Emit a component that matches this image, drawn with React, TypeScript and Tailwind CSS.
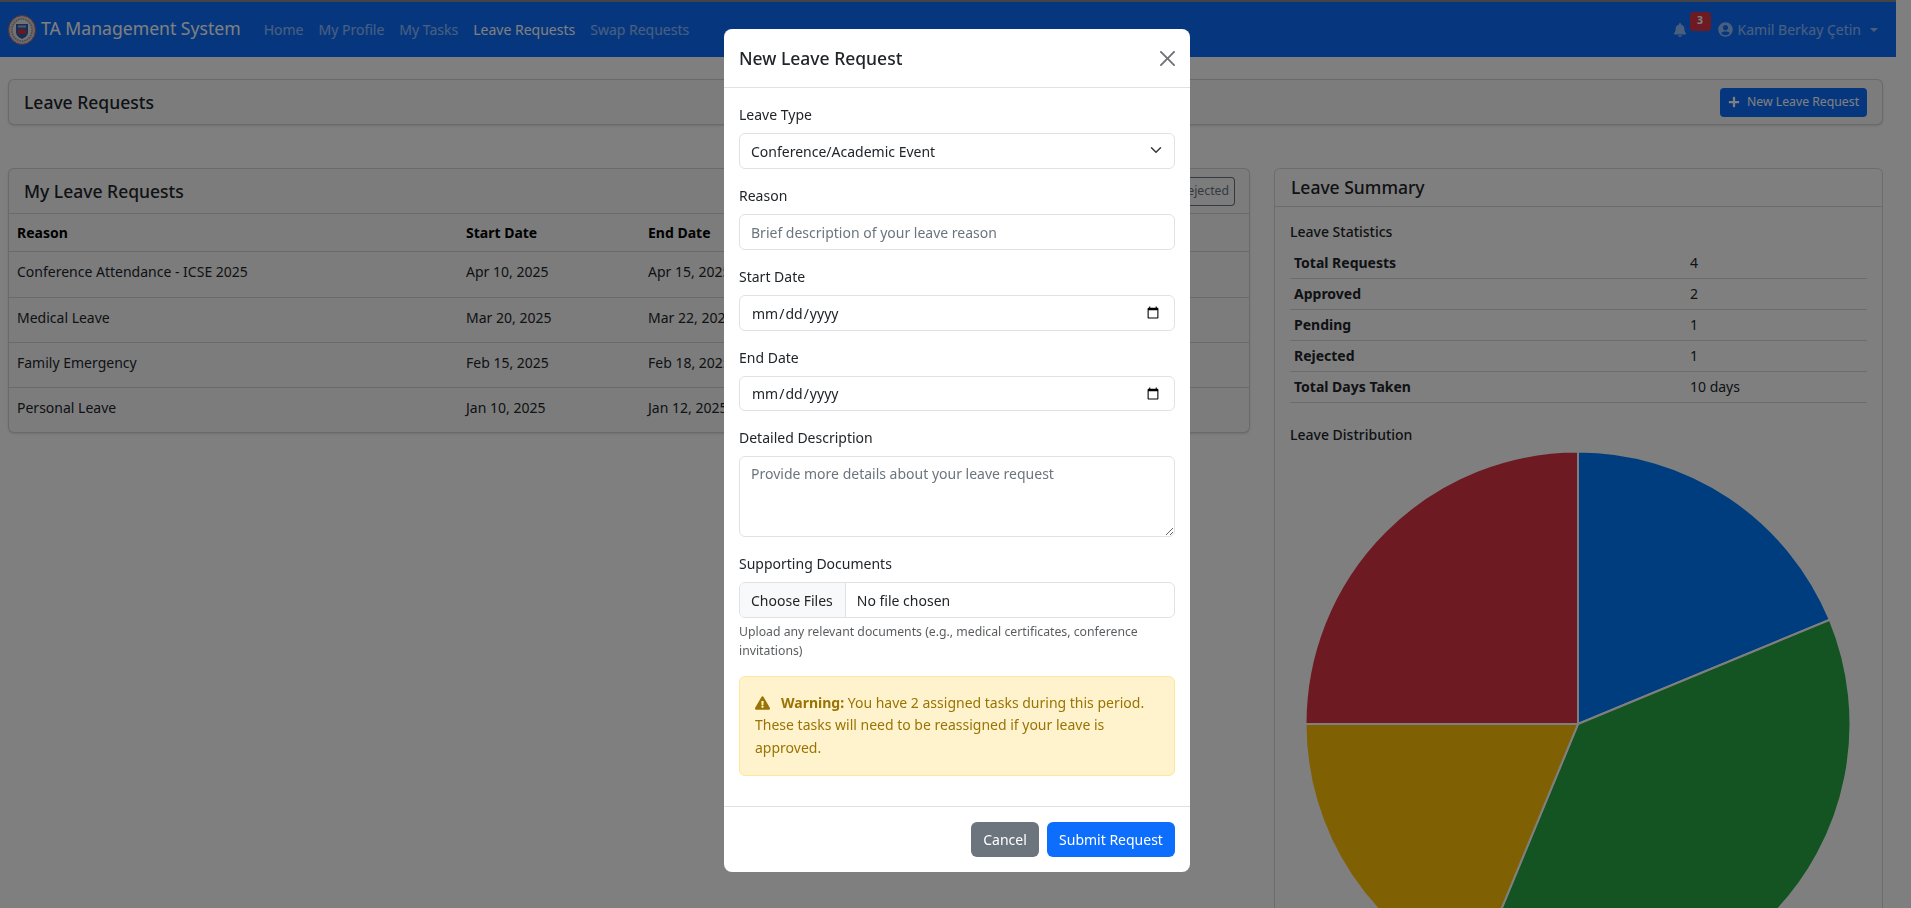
import { FaBell, FaExclamationTriangle, FaPlus, FaUserCircle } from "react-icons/fa"

const navLinks = [
  { label: "Home", active: false },
  { label: "My Profile", active: false },
  { label: "My Tasks", active: false },
  { label: "Leave Requests", active: true },
  { label: "Swap Requests", active: false },
]

const leaveRows = [
  ["Conference Attendance - ICSE 2025", "Apr 10, 2025", "Apr 15, 2025"],
  ["Medical Leave", "Mar 20, 2025", "Mar 22, 2025"],
  ["Family Emergency", "Feb 15, 2025", "Feb 18, 2025"],
  ["Personal Leave", "Jan 10, 2025", "Jan 12, 2025"],
]

const stats = [
  ["Total Requests", "4"],
  ["Approved", "2"],
  ["Pending", "1"],
  ["Rejected", "1"],
  ["Total Days Taken", "10 days"],
]

const slices = [
  { from: 0, to: 67.5, fill: "#007bff" },
  { from: 67.5, to: 202.5, fill: "#28a745" },
  { from: 202.5, to: 270, fill: "#ffc107" },
  { from: 270, to: 360, fill: "#dc3545" },
]

function slicePath(from: number, to: number, r: number) {
  const point = (deg: number) => {
    const rad = (deg * Math.PI) / 180
    return `${r * Math.sin(rad)} ${-r * Math.cos(rad)}`
  }
  const large = to - from > 180 ? 1 : 0
  return `M0 0 L${point(from)} A${r} ${r} 0 ${large} 1 ${point(to)} Z`
}

function Seal() {
  return (
    <svg viewBox="0 0 28 30" className="h-[30px] w-[28px] shrink-0">
      <ellipse cx="14" cy="15" rx="13.5" ry="14.5" fill="#d9cfd0" stroke="#b06060" strokeWidth="1" />
      <ellipse cx="14" cy="15" rx="10" ry="11" fill="#e8e4e4" stroke="#8a8fa8" strokeWidth="1.5" strokeDasharray="1.5 1" />
      <path d="M8 9 H20 V17 C20 21 16 23 14 24 C12 23 8 21 8 17 Z" fill="#2f5fa8" />
      <path d="M9.5 16 C11 13.5 17 13.5 18.5 16 L17.5 19 H10.5 Z" fill="#d8323c" />
      <rect x="10" y="10.5" width="8" height="2" fill="#9db4d8" />
    </svg>
  )
}

function Navbar() {
  return (
    <nav className="flex h-[55px] items-center bg-[#0d6efd] pl-2 pr-[18px]">
      <a className="flex items-center gap-[5px] text-white">
        <Seal />
        <span className="mb-[2px] text-[17.6px]">TA Management System</span>
      </a>
      <ul className="ml-[23px] flex gap-[15px] text-[14px]">
        {navLinks.map((l) => (
          <li key={l.label} className={l.active ? "text-white" : "text-white/55"}>
            {l.label}
          </li>
        ))}
      </ul>
      <div className="ml-auto flex items-center text-[14px] text-white/55">
        <span className="relative mr-[31px]">
          <FaBell className="h-[14px] w-[14px]" />
          <span className="absolute left-[17px] top-[-11px] flex h-[19px] w-[21px] items-center justify-center rounded-[4px] bg-[#dc3545] text-[10.5px] font-bold text-white">
            3
          </span>
        </span>
        <FaUserCircle className="mr-[5px] h-[15px] w-[15px]" />
        <span>Kamil Berkay Çetin</span>
        <span className="ml-[9px] h-0 w-0 border-x-[4px] border-t-[4px] border-x-transparent border-t-current" />
      </div>
    </nav>
  )
}

function LeaveTable() {
  return (
    <section className="h-[265px] overflow-hidden rounded-[6px] border border-black/15 bg-[#f8f9fa] shadow-sm">
      <div className="flex h-[45px] items-center justify-between border-b border-black/15 pl-[15px] pr-[14px]">
        <h2 className="text-[17.5px] font-medium text-[#212529]">My Leave Requests</h2>
        <div className="flex text-[12.25px] text-[#6c757d]">
          <span className="rounded-l-[4px] border border-[#6c757d] px-2 py-1">All</span>
          <span className="border border-l-0 border-[#6c757d] px-2 py-1">Approved</span>
          <span className="border border-l-0 border-[#6c757d] px-2 py-1">Pending</span>
          <span className="flex h-[29px] items-center rounded-r-[4px] border border-l-0 border-[#6c757d] pl-2 pr-[5px]">Rejected</span>
        </div>
      </div>
      <table className="w-full table-fixed text-left text-[14px] text-[#212529]">
        <thead>
          <tr className="h-[37px] border-b border-black/15 text-black">
            <th className="w-[448px] pl-2 font-bold">Reason</th>
            <th className="w-[182px] pl-[9px] font-bold">Start Date</th>
            <th className="pl-[9px] font-bold">End Date</th>
          </tr>
        </thead>
        <tbody>
          {leaveRows.map((row, i) => (
            <tr key={row[0]} className={i === 0 ? "h-[46px] border-b border-black/15" : i < 3 ? "h-[45px] border-b border-black/15" : "h-[45px]"}>
              <td className="pl-2 pt-[9px] align-top">{row[0]}</td>
              <td className="pl-[9px] pt-[9px] align-top">{row[1]}</td>
              <td className="pl-[9px] pt-[9px] align-top">{row[2]}</td>
            </tr>
          ))}
        </tbody>
      </table>
    </section>
  )
}

function SummaryCard() {
  return (
    <section className="h-[800px] rounded-[6px] border border-black/15 bg-white">
      <h2 className="flex h-[38px] items-center border-b border-black/15 pl-[16px] text-[17.5px] font-medium text-[#212529]">
        Leave Summary
      </h2>
      <div className="px-[15px] pt-[14px] text-[14px] text-[#212529]">
        <h3 className="mb-[5px] text-[14px] font-medium leading-[21px]">Leave Statistics</h3>
        <table className="w-full table-fixed text-left">
          <tbody>
            {stats.map(([k, v]) => (
              <tr key={k} className="h-[31px] border-b border-black/15">
                <th className="w-[400px] pl-[4px] font-bold">{k}</th>
                <td>{v}</td>
              </tr>
            ))}
          </tbody>
        </table>
        <h3 className="mt-[21px] text-[14px] font-medium leading-[21px]">Leave Distribution</h3>
        <svg viewBox="-274 -274 548 548" className="ml-[14px] mt-[5px] h-[548px] w-[548px]">
          {slices.map((s) => (
            <path key={s.fill} d={slicePath(s.from, s.to, 272.5)} fill={s.fill} stroke="#fff" strokeWidth="2" />
          ))}
        </svg>
      </div>
    </section>
  )
}

function Field({ label, children }: { label: string; children: React.ReactNode }) {
  return (
    <div className="mb-[16px]">
      <label className="mb-[8px] block text-[14px] leading-[21px] text-[#212529]">{label}</label>
      {children}
    </div>
  )
}

const inputCls =
  "block w-full rounded-[6px] border border-[#dee2e6] bg-white px-[11px] text-[14px] text-[#212529] placeholder:text-[#6c757d]"

function LeaveModal() {
  return (
    <div className="fixed inset-0 flex justify-center bg-black/50 pl-[3px] pt-[29px]">
      <div className="h-[843px] w-[466px] rounded-[8px] bg-white">
        <div className="flex h-[59px] items-center justify-between border-b border-[#dee2e6] pl-[15px] pr-[15px]">
          <h5 className="text-[17.5px] font-medium text-[#212529]">New Leave Request</h5>
          <svg viewBox="0 0 16 16" className="h-[15px] w-[15px] fill-[#6f7276]">
            <path d="M.293.293a1 1 0 0 1 1.414 0L8 6.586 14.293.293a1 1 0 1 1 1.414 1.414L9.414 8l6.293 6.293a1 1 0 0 1-1.414 1.414L8 9.414l-6.293 6.293a1 1 0 0 1-1.414-1.414L6.586 8 .293 1.707a1 1 0 0 1 0-1.414z" />
          </svg>
        </div>
        <div className="px-[15px] pt-[16px]">
          <Field label="Leave Type">
            <div className="relative">
              <select className={`${inputCls} h-[36px] appearance-none`} defaultValue="conference">
                <option value="conference">Conference/Academic Event</option>
                <option value="medical">Medical Leave</option>
              </select>
              <svg viewBox="0 0 16 16" className="pointer-events-none absolute right-[13px] top-[11px] h-[12px] w-[12px]" fill="none" stroke="#343a40" strokeWidth="2" strokeLinecap="round" strokeLinejoin="round">
                <path d="m2 5 6 6 6-6" />
              </svg>
            </div>
          </Field>
          <Field label="Reason">
            <input className={`${inputCls} h-[36px]`} placeholder="Brief description of your leave reason" />
          </Field>
          <Field label="Start Date">
            <input type="date" className={`${inputCls} h-[36px] pr-[12px]`} />
          </Field>
          <Field label="End Date">
            <input type="date" className={`${inputCls} h-[35px] pr-[12px]`} />
          </Field>
          <Field label="Detailed Description">
            <textarea
              className={`${inputCls} h-[81px] py-[6px]`}
              placeholder="Provide more details about your leave request"
            />
          </Field>
          <Field label="Supporting Documents">
            <input
              type="file"
              multiple
              className="block h-[36px] w-full overflow-hidden rounded-[6px] border border-[#dee2e6] bg-white text-[14px] text-[#212529] file:mr-[11px] file:h-full file:border-0 file:border-r file:border-solid file:border-[#dee2e6] file:bg-[#f8f9fa] file:pl-[11px] file:pr-[12px] file:text-[14px] file:text-[#212529]"
            />
            <p className="mt-[4px] text-[12.25px] leading-[19px] text-[#212529]/75">
              Upload any relevant documents (e.g., medical certificates, conference invitations)
            </p>
          </Field>
          <div className="h-[100px] rounded-[6px] border border-[#ffe69c] bg-[#fff3cd] px-[15px] py-[15px] text-[14px] leading-[22.4px] text-[#997404]">
            <FaExclamationTriangle className="mr-[11px] inline h-[14px] w-[15px] align-[-2px]" />
            <strong className="font-bold">Warning:</strong> You have 2 assigned tasks during this period. These tasks will need to be reassigned if your leave is approved.
          </div>
        </div>
        <div className="mt-[30px] flex h-[66px] items-center justify-end gap-[8px] border-t border-[#dee2e6] pr-[15px] text-[14px] text-white">
          <button className="h-[35px] w-[68px] rounded-[6px] bg-[#6c757d]">Cancel</button>
          <button className="h-[35px] w-[128px] rounded-[6px] bg-[#0d6efd]">Submit Request</button>
        </div>
      </div>
    </div>
  )
}

export default function App() {
  return (
    <div className="h-[908px] overflow-hidden bg-white font-['Noto_Sans',sans-serif] text-[14px]">
      <div className="mr-[15px] border-t-[2px] border-[#888]">
        <Navbar />
        <main className="px-[8px] pr-[13px] pt-[22px]">
          <div className="mb-[43px] flex h-[46px] items-center justify-between rounded-[6px] border border-black/15 bg-[#f8f9fa] pl-[15px] pr-[15px] shadow-sm">
            <h1 className="text-[17.5px] font-medium text-[#212529]">Leave Requests</h1>
            <button className="flex h-[29px] w-[147px] items-center justify-center gap-[7px] rounded-[4px] bg-[#0d6efd] text-[12.25px] text-white">
              <FaPlus className="h-[12px] w-[12px]" />
              New Leave Request
            </button>
          </div>
          <div className="grid grid-cols-[1242px_609px] gap-[24px]">
            <LeaveTable />
            <SummaryCard />
          </div>
        </main>
      </div>
      <LeaveModal />
    </div>
  )
}
